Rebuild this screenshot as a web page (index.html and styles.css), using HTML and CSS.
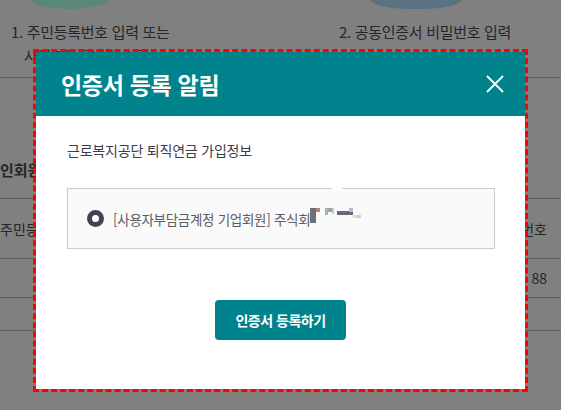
FILE: index.html
```html
<!DOCTYPE html>
<html lang="ko">
<head>
<meta charset="utf-8">
<title>인증서 등록 알림</title>
<link rel="stylesheet" href="styles.css">
</head>
<body>
<div class="page">
  <div class="steps">
    <div class="step step-one">
      <div class="step-icon icon-green"></div>
      <p class="step-text">1. 주민등록번호 입력 또는<br>사업자등록번호 입력</p>
    </div>
    <div class="step step-two">
      <div class="step-icon icon-blue"></div>
      <p class="step-text">2. 공동인증서 비밀번호 입력</p>
    </div>
  </div>
  <h2 class="section-title">인회원 정보</h2>
  <div class="table">
    <div class="row row-head">
      <span class="cell">주민등록번호</span>
      <span class="cell cell-right">사업자번호</span>
    </div>
    <div class="row row-data">
      <span class="cell"></span>
      <span class="cell cell-right">88</span>
    </div>
    <div class="row row-empty"></div>
  </div>
</div>

<div class="modal" role="dialog">
  <div class="modal-header">
    <h1 class="modal-title">인증서 등록 알림</h1>
    <button class="modal-close" aria-label="닫기">
      <svg width="18" height="18" viewBox="0 0 18 18"><path d="M1 1 L17 17 M17 1 L1 17" stroke="#fff" stroke-width="1.8" fill="none"/></svg>
    </button>
  </div>
  <div class="modal-body">
    <p class="modal-subtitle">근로복지공단 퇴직연금 가입정보</p>
    <div class="choice">
      <span class="notch"></span>
      <span class="radio"></span>
      <span class="choice-label">[사용자부담금계정 기업회원] 주식회</span>
      <svg class="masked" width="52" height="16" viewBox="0 0 52 16">
        <rect x="0" y="0" width="6" height="15" fill="#6f6f78"/>
        <rect x="6" y="0" width="4" height="4" fill="#a88a78"/>
        <rect x="15" y="0" width="3" height="7" fill="#8fb8d8"/>
        <rect x="18" y="0" width="4" height="4" fill="#b89a80"/>
        <rect x="22" y="0" width="2" height="6" fill="#a8d0e8"/>
        <rect x="27" y="3" width="16" height="4" fill="#6a6a74"/>
        <rect x="39" y="0" width="4" height="4" fill="#9cc4e4"/>
        <rect x="43" y="7" width="4" height="3" fill="#e8dcc4"/>
        <rect x="47" y="7" width="4" height="3" fill="#cfcfcf"/>
      </svg>
    </div>
    <div class="modal-actions">
      <button class="btn-primary">인증서 등록하기</button>
    </div>
  </div>
</div>
</body>
</html>
```

FILE: styles.css
```css
* { box-sizing: border-box; }
html, body { margin: 0; padding: 0; }
body {
  width: 561px;
  height: 410px;
  overflow: hidden;
  background: #808080;
  font-family: "Noto Sans CJK KR", "Noto Sans", sans-serif;
  color: #262626;
  position: relative;
}
.page { width: 561px; }
.steps {
  display: flex;
  height: 78px;
  border-bottom: 1px solid #5e5e5e;
}
.step { position: relative; }
.step-one { margin-left: 11px; width: 200px; }
.step-two { margin-left: 128px; width: 200px; }
.step-icon {
  position: absolute;
  top: 0;
  width: 76px;
  height: 9px;
  border-radius: 0 0 38px 38px / 0 0 9px 9px;
}
.icon-green { left: 21px; background: #5b877a; }
.icon-blue { left: 32px; width: 90px; background: #5b7282; }
.step-text {
  margin: 20px 0 0;
  font-size: 15px;
  line-height: 24px;
  padding-left: 13px;
  text-indent: -13px;
  letter-spacing: -0.3px;
}
.section-title {
  margin: 82px 0 0;
  font-size: 15px;
  font-weight: 700;
  line-height: 20px;
  height: 38px;
}
.table { border-top: 1px solid #5e5e5e; }
.row {
  display: flex;
  justify-content: space-between;
  border-bottom: 1px solid #5e5e5e;
  font-size: 14px;
}
.row-head { height: 60px; align-items: center; }
.row-data { height: 39px; align-items: center; }
.row-empty { height: 33px; }
.cell-right { padding-right: 14px; }

.modal {
  position: absolute;
  left: 36px;
  top: 52px;
  width: 489px;
  height: 337px;
  background: #fff;
  outline: 3px dashed #ff0000;
}
.modal-header {
  height: 64px;
  background: #00838d;
  display: flex;
  align-items: center;
  justify-content: space-between;
  padding: 0 21px 0 25px;
}
.modal-title {
  margin: 0;
  color: #fff;
  font-size: 23px;
  font-weight: 700;
  letter-spacing: -0.3px;
}
.modal-close {
  border: 0;
  background: none;
  padding: 0;
  width: 18px;
  height: 18px;
  display: block;
}
.modal-close svg { display: block; }
.modal-body { padding: 23px 31px 0; }
.modal-subtitle {
  margin: 0;
  font-size: 14px;
  line-height: 22px;
  color: #3a3d4c;
  letter-spacing: -0.2px;
}
.choice {
  position: relative;
  margin-top: 27px;
  height: 61px;
  width: 428px;
  border: 1px solid #cccccc;
  background: #fafafa;
  display: flex;
  align-items: center;
  padding-left: 19px;
}
.notch {
  position: absolute;
  top: -1px;
  left: 264px;
  width: 10px;
  height: 2px;
  background: #fff;
}
.radio {
  width: 17px;
  height: 17px;
  border-radius: 50%;
  border: 5px solid #3e4358;
  background: #fff;
  margin-right: 9px;
  flex: none;
}
.choice-label {
  font-size: 13.5px;
  color: #5a5c66;
  letter-spacing: -0.3px;
}
.masked { display: block; margin-top: -6px; }
.modal-actions {
  display: flex;
  justify-content: center;
  margin-top: 51px;
}
.btn-primary {
  width: 131px;
  height: 40px;
  border: 0;
  border-radius: 4px;
  background: #00838d;
  color: #fff;
  font-family: "Noto Sans CJK KR", sans-serif;
  font-size: 14px;
  font-weight: 700;
  letter-spacing: -0.5px;
}
```
